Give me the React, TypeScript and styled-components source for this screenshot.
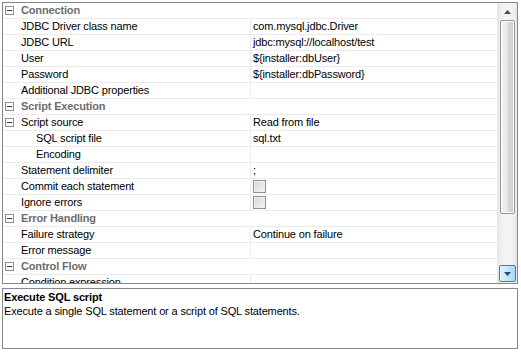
import React from "react";
import styled, { createGlobalStyle } from "styled-components";

const GlobalStyle = createGlobalStyle`
  html, body { margin: 0; padding: 0; background: #ffffff; }
  body { font-family: "Liberation Sans", Arial, sans-serif; font-size: 11px; letter-spacing: -0.15px; color: #000; }
  * { box-sizing: border-box; }
`;

const Root = styled.div`
  width: 521px;
  padding: 2px 3px 0 2px;
  display: flex;
  flex-direction: column;
  gap: 4px;
`;

const GridPanel = styled.div`
  height: 282px;
  border: 1px solid #828790;
  display: flex;
  background: #fff;
`;

const Rows = styled.div`
  flex: 1;
  overflow: hidden;
  display: flex;
  flex-direction: column;
`;

const CategoryRow = styled.div`
  height: 16px;
  flex: none;
  display: flex;
  align-items: center;
  padding-left: 2px;
  border-bottom: 1px solid #ececec;
  font-weight: bold;
  color: #6d6d6d;
  line-height: 15px;
`;

const PropRow = styled.div`
  height: 16px;
  flex: none;
  display: grid;
  grid-template-columns: 248px 1fr;
  border-bottom: 1px solid #ececec;
  line-height: 15px;
`;

const LabelCell = styled.div<{ $indent: number }>`
  display: flex;
  align-items: center;
  padding-left: ${(p) => p.$indent}px;
  border-right: 1px solid #ececec;
  white-space: nowrap;
  overflow: hidden;
`;

const ValueCell = styled.div`
  display: flex;
  align-items: center;
  padding-left: 2px;
  white-space: nowrap;
  overflow: hidden;
`;

const Toggle = styled.span`
  width: 9px;
  height: 9px;
  flex: none;
  margin-right: 7px;
  border: 1px solid #919191;
  background: #fff;
  position: relative;
  &::after {
    content: "";
    position: absolute;
    left: 1px;
    top: 3px;
    width: 5px;
    height: 1px;
    background: #3a3a3a;
  }
`;

const CheckBox = styled.span`
  width: 13px;
  height: 13px;
  border: 1px solid #8e8f8f;
  background: linear-gradient(135deg, #d6d6d6 0%, #f4f4f4 100%);
  box-shadow: inset 0 0 0 1px #f0f0f0;
`;

const ScrollBar = styled.div`
  width: 20px;
  flex: none;
  display: flex;
  flex-direction: column;
  background: linear-gradient(90deg, #e6e6e6 0%, #f3f3f3 30%, #f3f3f3 70%, #e9e9e9 100%);
  padding: 0 1px 1px 2px;
`;

const ArrowButton = styled.div<{ $hover?: boolean }>`
  height: 17px;
  flex: none;
  display: flex;
  align-items: center;
  justify-content: center;
  border: 1px solid ${(p) => (p.$hover ? "#3c7fb1" : "transparent")};
  border-radius: 2px;
  background: ${(p) =>
    p.$hover ? "linear-gradient(90deg, #e5f4fc 0%, #c4e5f6 50%, #a9daf5 100%)" : "transparent"};
`;

const Thumb = styled.div`
  height: 194px;
  flex: none;
  margin: 0 1px 0 1px;
  border: 1px solid #979797;
  border-radius: 2px;
  background: linear-gradient(90deg, #f2f2f2 0%, #ebebeb 45%, #d9d9d9 55%, #cfcfcf 100%);
  box-shadow: inset 0 0 0 1px #fafafa;
`;

const TrackSpace = styled.div`
  flex: 1;
`;

const DescPanel = styled.div`
  height: 61px;
  border: 1px solid #828790;
  padding: 1px 2px 0 1px;
  line-height: 14px;
`;

const DescTitle = styled.div`
  font-weight: bold;
`;

const DescText = styled.div``;

const Arrow = ({ up }: { up?: boolean }) => (
  <svg width="7" height="4" viewBox="0 0 7 4">
    {up ? <path d="M0 4 L3.5 0 L7 4 Z" fill="#4d4d4d" /> : <path d="M0 0 L3.5 4 L7 0 Z" fill="#2d4a62" />}
  </svg>
);

type Item =
  | { kind: "cat"; label: string }
  | { kind: "prop"; label: string; value?: string; level?: number; toggle?: boolean; check?: boolean };

const items: Item[] = [
  { kind: "cat", label: "Connection" },
  { kind: "prop", label: "JDBC Driver class name", value: "com.mysql.jdbc.Driver" },
  { kind: "prop", label: "JDBC URL", value: "jdbc:mysql://localhost/test" },
  { kind: "prop", label: "User", value: "${installer:dbUser}" },
  { kind: "prop", label: "Password", value: "${installer:dbPassword}" },
  { kind: "prop", label: "Additional JDBC properties" },
  { kind: "cat", label: "Script Execution" },
  { kind: "prop", label: "Script source", value: "Read from file", toggle: true },
  { kind: "prop", label: "SQL script file", value: "sql.txt", level: 2 },
  { kind: "prop", label: "Encoding", level: 2 },
  { kind: "prop", label: "Statement delimiter", value: ";" },
  { kind: "prop", label: "Commit each statement", check: true },
  { kind: "prop", label: "Ignore errors", check: true },
  { kind: "cat", label: "Error Handling" },
  { kind: "prop", label: "Failure strategy", value: "Continue on failure" },
  { kind: "prop", label: "Error message" },
  { kind: "cat", label: "Control Flow" },
  { kind: "prop", label: "Condition expression" },
];

export default function App() {
  return (
    <>
      <GlobalStyle />
      <Root>
        <GridPanel>
          <Rows>
            {items.map((it, i) =>
              it.kind === "cat" ? (
                <CategoryRow key={i}>
                  <Toggle />
                  {it.label}
                </CategoryRow>
              ) : (
                <PropRow key={i}>
                  <LabelCell $indent={it.toggle ? 2 : it.level === 2 ? 33 : 18}>
                    {it.toggle && <Toggle />}
                    {it.label}
                  </LabelCell>
                  <ValueCell>{it.check ? <CheckBox /> : it.value}</ValueCell>
                </PropRow>
              )
            )}
          </Rows>
          <ScrollBar>
            <ArrowButton>
              <Arrow up />
            </ArrowButton>
            <Thumb />
            <TrackSpace />
            <ArrowButton $hover>
              <Arrow />
            </ArrowButton>
          </ScrollBar>
        </GridPanel>
        <DescPanel>
          <DescTitle>Execute SQL script</DescTitle>
          <DescText>Execute a single SQL statement or a script of SQL statements.</DescText>
        </DescPanel>
      </Root>
    </>
  );
}
